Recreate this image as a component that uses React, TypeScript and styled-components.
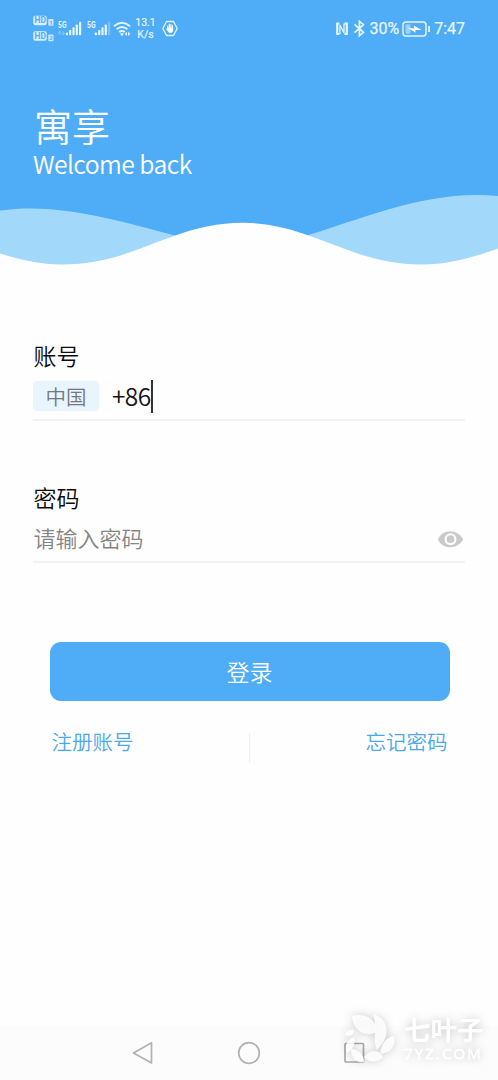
import React from "react";
import styled, { createGlobalStyle } from "styled-components";

const cjk = `"Noto Sans CJK SC", "Noto Sans", sans-serif`;

const GlobalStyle = createGlobalStyle`
  * { box-sizing: border-box; }
  body { margin: 0; background: #fefefe; font-family: ${cjk}; font-weight: 350; }
`;

const Screen = styled.div`
  display: flex;
  flex-direction: column;
  width: 498px;
  height: 1080px;
  background: #fefefe;
  overflow: hidden;
`;

const Header = styled.header`
  background: #4facf7;
  color: #fff;
  height: 270px;
  flex: none;
`;

const StatusBar = styled.div`
  display: flex;
  justify-content: space-between;
  height: 57px;
  padding: 0 33px 0 33px;
  font-family: Roboto, sans-serif;
  color: #e6f6ff;
`;

const StatusGroup = styled.div`
  display: flex;
  align-items: center;
`;

const StatusText = styled.span`
  font-size: 16px;
  font-weight: 400;
  line-height: 20px;
  padding-top: 1px;
  white-space: nowrap;
  -webkit-text-stroke: 0.25px #e6f6ff;
`;

const NetSpeed = styled.div`
  width: 24px;
  margin: 0 4px 0 3px;
  font-size: 10.5px;
  font-weight: 400;
  line-height: 12px;
  text-align: center;
  -webkit-text-stroke: 0.2px #e6f6ff;
`;

const Icon = styled.svg<{ $gap?: number }>`
  display: block;
  flex: none;
  margin-right: ${(p) => p.$gap ?? 0}px;
`;

const Brand = styled.div`
  height: 133px;
  padding: 49px 33px 0 34px;
`;

const Title = styled.h1`
  margin: 0;
  font-size: 38px;
  font-weight: 350;
  line-height: 38px;
`;

const Subtitle = styled.p`
  margin: 3px 0 0 -1px;
  font-size: 24.8px;
  line-height: 33px;
  letter-spacing: -0.6px;
`;

const Form = styled.main`
  flex: 1;
  display: flex;
  flex-direction: column;
  padding: 69px 33px 0;
`;

const Field = styled.section`
  height: 82px;
  margin-bottom: 60px;
  border-bottom: 2px solid #f1f2f2;
`;

const Label = styled.div`
  padding-left: 0.5px;
  font-size: 23px;
  line-height: 32px;
  color: #0b0b0b;
`;

const InputRow = styled.div<{ $top?: number }>`
  display: flex;
  align-items: center;
  height: 48px;
  margin-top: ${(p) => p.$top ?? 0}px;
`;

const Country = styled.span`
  width: 66px;
  height: 30px;
  margin-right: 13px;
  border-radius: 4px;
  background: #e9f5fd;
  color: #72787e;
  font-size: 20.5px;
  line-height: 30px;
  text-align: center;
`;

const Phone = styled.span`
  font-size: 24.5px;
  line-height: 32px;
  letter-spacing: -0.6px;
  color: #151515;
`;

const Caret = styled.span`
  width: 2px;
  height: 33px;
  background: #333;
`;

const Placeholder = styled.span`
  flex: 1;
  padding-left: 0.5px;
  font-size: 22px;
  line-height: 32px;
  color: #858585;
`;

const LoginButton = styled.button`
  height: 59px;
  margin: 18.5px 15.5px 0 16.5px;
  padding: 0;
  border: 0;
  border-radius: 11px;
  background: #4facf6;
  color: #fff;
  font: 350 23px/58px ${cjk};
`;

const Links = styled.div`
  display: flex;
  justify-content: space-between;
  height: 64px;
  padding: 25.5px 17.5px 0 18.5px;
`;

const Link = styled.a`
  color: #4ca8e8;
  font-size: 20.5px;
  line-height: 30px;
`;

const Divider = styled.span`
  width: 1px;
  height: 30px;
  margin-top: 7px;
  background: #eeeeee;
`;

const NavBar = styled.nav`
  display: flex;
  position: relative;
  flex: none;
  height: 54px;
  padding-left: 131px;
  align-items: center;
  background: #fcfcfc;
`;

const Watermark = styled.div`
  position: absolute;
  left: 340px;
  bottom: 11px;
  display: flex;
  align-items: center;
  height: 62px;
  color: #fff;
  filter: drop-shadow(0 0 5px rgba(0, 0, 0, 0.22));
`;

const WatermarkText = styled.div`
  margin-left: 8px;
  white-space: nowrap;
`;

const WatermarkName = styled.div`
  font-size: 26.5px;
  font-weight: 700;
  line-height: 27px;
`;

const WatermarkSite = styled.div`
  padding-top: 2px;
  font: 400 15px/18px "Open Sans", sans-serif;
  letter-spacing: 2.1px;
  -webkit-text-stroke: 0.5px #fff;
`;

const HdBadges = () => (
  <Icon width="22" height="30" viewBox="0 0 22 30" fontFamily="Roboto, sans-serif" fontWeight="700">
    {[0, 15.5].map((y, i) => (
      <g key={y} transform={`translate(0 ${y - 0.7})`}>
        <rect x="0.3" y="2.4" width="13.4" height="9.6" rx="2" fill="#d9f0ff" />
        <text x="1.5" y="10.2" fontSize="8.4" fill="#4facf7">HD</text>
        <rect x="15.3" y="5.6" width="5.2" height="6.8" rx="0.8" fill="#cbe8ff" />
        <text x="16.3" y="11.3" fontSize="6" fill="#4facf7">{i + 1}</text>
      </g>
    ))}
  </Icon>
);

const Signal = ({ weak }: { weak?: boolean }) => (
  <Icon $gap={weak ? 1 : 0.5} width="28" height="24" viewBox="0 0 28 24" fill="#e6f6ff">
    <text x="3" y="11" fontSize="9" fontWeight="700" fontFamily="Roboto, sans-serif" textLength="8.5" lengthAdjust="spacingAndGlyphs">5G</text>
    {!weak && <path d="M5 14v4M3.5 16L5 14M8 14v4l1.5-2" stroke="#8dcaff" strokeWidth="1" fill="none" />}
    {[0, 1, 2, 3, 4].map((i) => (
      <rect key={i} x={10.8 + i * 3.3} y={15.6 - i * 2.7} width="2.2" height={2.7 + i * 2.7} rx="0.7" opacity={weak && i === 4 ? 0.3 : 1} />
    ))}
  </Icon>
);

const Wifi = () => (
  <Icon width="18" height="18" viewBox="0 0 18 18" fill="none" stroke="#e6f6ff" strokeWidth="1.9">
    <path d="M1 6.3Q9 -0.6 17 6.3M3.6 9.3Q9 4.7 14.4 9.3M6.2 12Q9 9.8 11.8 12" />
    <path d="M7 13.8Q9 12.4 10.8 13.8L9 16.2Z" fill="#e6f6ff" stroke="none" />
    <path d="M14 11.8v4.2l-2.4-2.1zM15 11.8v4.2l2.4-2.1z" fill="#e6f6ff" stroke="none" />
  </Icon>
);

const HandBadge = () => (
  <Icon width="16" height="18" viewBox="0 0 16 18">
    <path d="M4.5 1.5h7L15.2 8.5l-3.7 7h-7L.8 8.5z" fill="none" stroke="#e6f6ff" strokeWidth="1.3" strokeLinejoin="round" />
    <path d="M5.7 9.5V6M7.3 8.5V4.3M8.9 8.5V4.5M10.5 9.5V5.7" stroke="#fff" strokeWidth="1.2" strokeLinecap="round" />
    <path d="M5 8h6.1v2.3Q11 13 8.3 13Q6.4 13 4.3 9.3Z" fill="#fff" />
  </Icon>
);

const Nfc = () => (
  <Icon $gap={4} width="14" height="16" viewBox="0 0 14 16" fill="none" stroke="#e6f6ff">
    <path d="M4.4 2.6H2.2V13H4.4M9.4 2.6H11.8V13H9.4" strokeWidth="2.2" />
    <path d="M4.9 13V4L9 12V2.6" strokeWidth="1.3" />
  </Icon>
);

const Bluetooth = () => (
  <Icon $gap={3} width="13" height="18" viewBox="0 0 13 18" fill="none" stroke="#e6f6ff" strokeWidth="1.7">
    <path d="M1.5 4.4l9 7.9L6.4 15.7V1.3l4.1 3.4-9 7.9" />
  </Icon>
);

const Battery = () => (
  <Icon $gap={3} width="29" height="16" viewBox="0 0 29 16">
    <rect x="1" y="1" width="23" height="14" rx="3" fill="none" stroke="#e6f6ff" strokeWidth="1.5" />
    <rect x="3.5" y="3.3" width="5" height="9.4" rx="1" fill="#9bd1ff" />
    <path d="M5.5 6.7L12.2 7.4 11.6 4.4 19.8 8.9 13.2 8.9 13.8 11.8Z" fill="#fff" />
    <path d="M27 5v6" stroke="#e6f6ff" strokeWidth="1.8" />
  </Icon>
);

const Wave = () => (
  <Icon width="498" height="80" viewBox="0 190 498 80">
    <path d="M0 210.5C55 203 106 217 177 236L150 268H0Z" fill="#a2d8fa" />
    <path d="M305 236C365 218 429 189 498 196V268H330Z" fill="#a2d8fa" />
    <path d="M0 253.5C21 260 40 264.5 62 264.5C136 264.5 172 222.8 243 222.8C310 222.8 351 264.5 421 264.5C451 264.5 477 256 498 248.5V270H0Z" fill="#fefefe" />
  </Icon>
);

const Eye = () => (
  <Icon width="28" height="24" viewBox="0 -4.7 28 24">
    <path d="M.8 9.7C6-1.2 20-1.2 26.2 9.7C20 20 6 20 .8 9.7Z" fill="#cacaca" />
    <circle cx="13.5" cy="9.5" r="4.9" fill="none" stroke="#fff" strokeWidth="2.1" />
  </Icon>
);

const LeafLogo = () => (
  <Icon width="56" height="56" viewBox="340 1010 56 56" fill="#fff" fillOpacity=".85">
    <path d="M352 1016C361 1013 372 1016 376 1026L375 1033C363 1037 353 1029 352 1016Z" />
    <path d="M373 1014C385 1017 390 1029 384 1041L377 1050C372 1038 378 1028 373 1014Z" />
    <path d="M394 1036C396 1046 391 1053 380.5 1053.5C381 1044 385 1038 394 1036Z" />
    <path d="M364 1057C370 1049 379 1049 383 1057C377 1063 370 1063 364 1057Z" />
    <path d="M351 1049C360 1050 364 1055 364 1062C356 1063 351 1058 351 1049Z" />
    <path d="M354 1037C356 1044 352 1050 347 1053C344 1046 347 1040 354 1037Z" />
    <path d="M354 1030C354 1035 349 1037 345 1035C346 1031 350 1029 354 1030Z" />
  </Icon>
);

export default function App() {
  return (
    <Screen>
      <GlobalStyle />
      <Header>
        <StatusBar>
          <StatusGroup>
            <HdBadges />
            <Signal />
            <Signal weak />
            <Wifi />
            <NetSpeed>13.1<br />K/s</NetSpeed>
            <HandBadge />
          </StatusGroup>
          <StatusGroup>
            <Nfc />
            <Bluetooth />
            <StatusText>30%</StatusText>
            <Icon as="span" $gap={3} />
            <Battery />
            <StatusText>7:47</StatusText>
          </StatusGroup>
        </StatusBar>
        <Brand>
          <Title>寓享</Title>
          <Subtitle>Welcome back</Subtitle>
        </Brand>
        <Wave />
      </Header>
      <Form>
        <Field>
          <Label>账号</Label>
          <InputRow $top={1}>
            <Country>中国</Country>
            <Phone>+86</Phone>
            <Caret />
          </InputRow>
        </Field>
        <Field>
          <Label>密码</Label>
          <InputRow>
            <Placeholder>请输入密码</Placeholder>
            <Eye />
          </InputRow>
        </Field>
        <LoginButton>登录</LoginButton>
        <Links>
          <Link>注册账号</Link>
          <Divider />
          <Link>忘记密码</Link>
        </Links>
      </Form>
      <NavBar>
        <Icon $gap={82} width="24" height="24" viewBox="0 0 24 24" fill="none" stroke="#b2b2b2" strokeWidth="1.7" strokeLinejoin="round">
          <path d="M2.5 12L20.5 1.8V22Z" />
        </Icon>
        <Icon $gap={82} width="24" height="24" viewBox="0 0 24 24" fill="none" stroke="#b2b2b2" strokeWidth="1.7">
          <circle cx="12" cy="12" r="10.3" />
        </Icon>
        <Icon width="24" height="24" viewBox="0 0 24 24" fill="none" stroke="#aaa" strokeWidth="1.7">
          <rect x="2" y="2.5" width="18.5" height="18.5" rx="1" />
        </Icon>
        <Watermark>
          <LeafLogo />
          <WatermarkText>
            <WatermarkName>七叶子</WatermarkName>
            <WatermarkSite>7YZ.COM</WatermarkSite>
          </WatermarkText>
        </Watermark>
      </NavBar>
    </Screen>
  );
}
